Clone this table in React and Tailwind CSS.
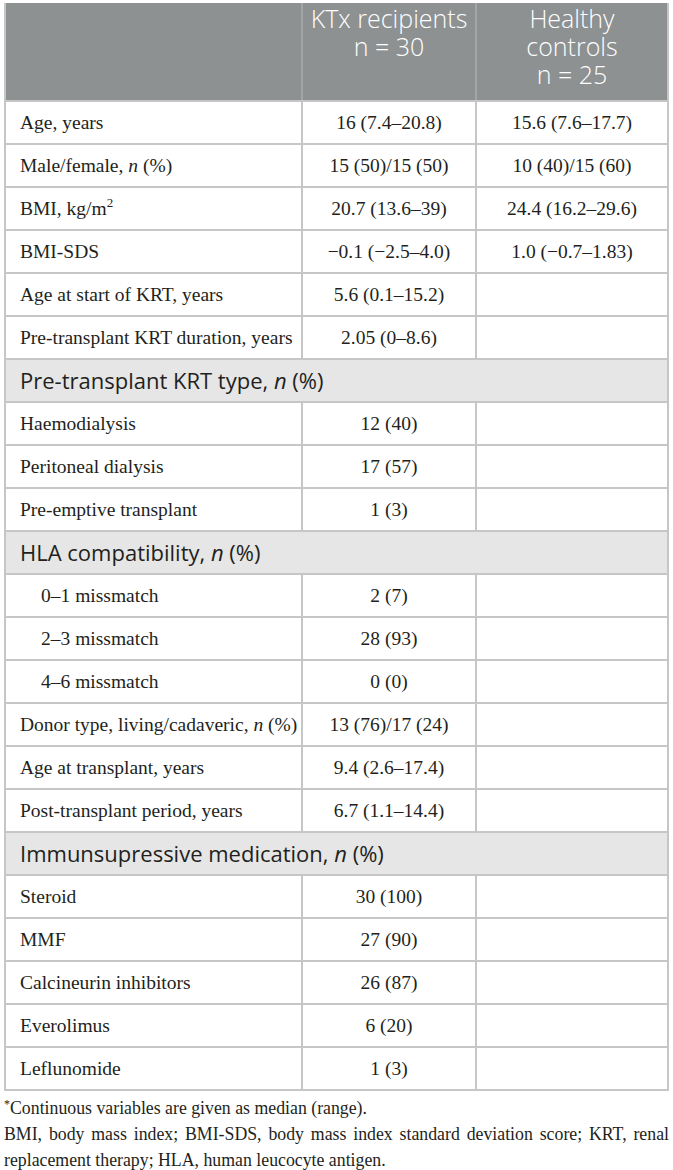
import React from 'react'

const serif = { fontFamily: '"Liberation Serif", "Times New Roman", serif' }
const sans = { fontFamily: '"Open Sans", Lato, sans-serif' }

const rows = [
  { label: 'Age, years', a: '16 (7.4–20.8)', b: '15.6 (7.6–17.7)' },
  { label: <>Male/female, <i>n</i> (%)</>, a: '15 (50)/15 (50)', b: '10 (40)/15 (60)' },
  { label: <>BMI, kg/m<sup className="text-[13px] relative -top-[8px]">2</sup></>, a: '20.7 (13.6–39)', b: '24.4 (16.2–29.6)' },
  { label: 'BMI-SDS', a: '−0.1 (−2.5–4.0)', b: '1.0 (−0.7–1.83)' },
  { label: 'Age at start of KRT, years', a: '5.6 (0.1–15.2)', b: '' },
  { label: 'Pre-transplant KRT duration, years', a: '2.05 (0–8.6)', b: '' },
  { section: <>Pre-transplant KRT type, <i>n</i> (%)</> },
  { label: 'Haemodialysis', a: '12 (40)', b: '' },
  { label: 'Peritoneal dialysis', a: '17 (57)', b: '' },
  { label: 'Pre-emptive transplant', a: '1 (3)', b: '' },
  { section: <>HLA compatibility, <i>n</i> (%)</> },
  { label: '0–1 missmatch', a: '2 (7)', b: '', indent: true },
  { label: '2–3 missmatch', a: '28 (93)', b: '', indent: true },
  { label: '4–6 missmatch', a: '0 (0)', b: '', indent: true },
  { label: <>Donor type, living/cadaveric, <i>n</i> (%)</>, a: '13 (76)/17 (24)', b: '' },
  { label: 'Age at transplant, years', a: '9.4 (2.6–17.4)', b: '' },
  { label: 'Post-transplant period, years', a: '6.7 (1.1–14.4)', b: '' },
  { section: <>Immunsupressive medication, <i>n</i> (%)</> },
  { label: 'Steroid', a: '30 (100)', b: '' },
  { label: 'MMF', a: '27 (90)', b: '' },
  { label: 'Calcineurin inhibitors', a: '26 (87)', b: '' },
  { label: 'Everolimus', a: '6 (20)', b: '' },
  { label: 'Leflunomide', a: '1 (3)', b: '' },
]

function Row({ row }) {
  if (row.section) {
    return (
      <div
        className="h-[43px] border-t-2 border-[#c6c6c6] bg-[#e6e6e6] flex items-center px-[14px] text-[22px] text-[#231f20]"
        style={sans}
      >
        <span>{row.section}</span>
      </div>
    )
  }
  return (
    <div className="h-[43px] border-t-2 border-[#c6c6c6] grid grid-cols-[297px_174px_1fr] text-[19.5px] text-[#231f20]" style={serif}>
      <div className={`flex items-center border-r-2 border-[#c6c6c6] ${row.indent ? 'pl-[35px]' : 'pl-[14px]'}`}>
        <span>{row.label}</span>
      </div>
      <div className="flex items-center justify-center border-r-2 border-[#c6c6c6]">{row.a}</div>
      <div className="flex items-center justify-center">{row.b}</div>
    </div>
  )
}

export default function App() {
  return (
    <div className="w-[673px] min-h-[1170px] bg-white px-[4px] pt-[3px]">
      <div className="border-x-2 border-b-2 border-[#c6c6c6]">
        {/* Header */}
        <div
          className="h-[97px] bg-[#8d9192] grid grid-cols-[297px_174px_1fr] text-white text-[25px] font-light leading-[28px]"
          style={sans}
        >
          <div className="border-r-2 border-[#a3a6a7]"></div>
          <div className="border-r-2 border-[#a3a6a7] text-center pt-[1px]">
            KTx recipients<br />n = 30
          </div>
          <div className="text-center pt-[1px]">
            Healthy<br />controls<br />n = 25
          </div>
        </div>

        {rows.map((row, i) => (
          <Row key={i} row={row} />
        ))}
      </div>

      {/* Footnote */}
      <div className="pt-[4px] text-[17.8px] leading-[26px] text-[#231f20] text-justify" style={serif}>
        <p><sup className="text-[12px] relative -top-[6px]">*</sup>Continuous variables are given as median (range).</p>
        <p>BMI, body mass index; BMI-SDS, body mass index standard deviation score; KRT, renal replacement therapy; HLA, human leucocyte antigen.</p>
      </div>
    </div>
  )
}
